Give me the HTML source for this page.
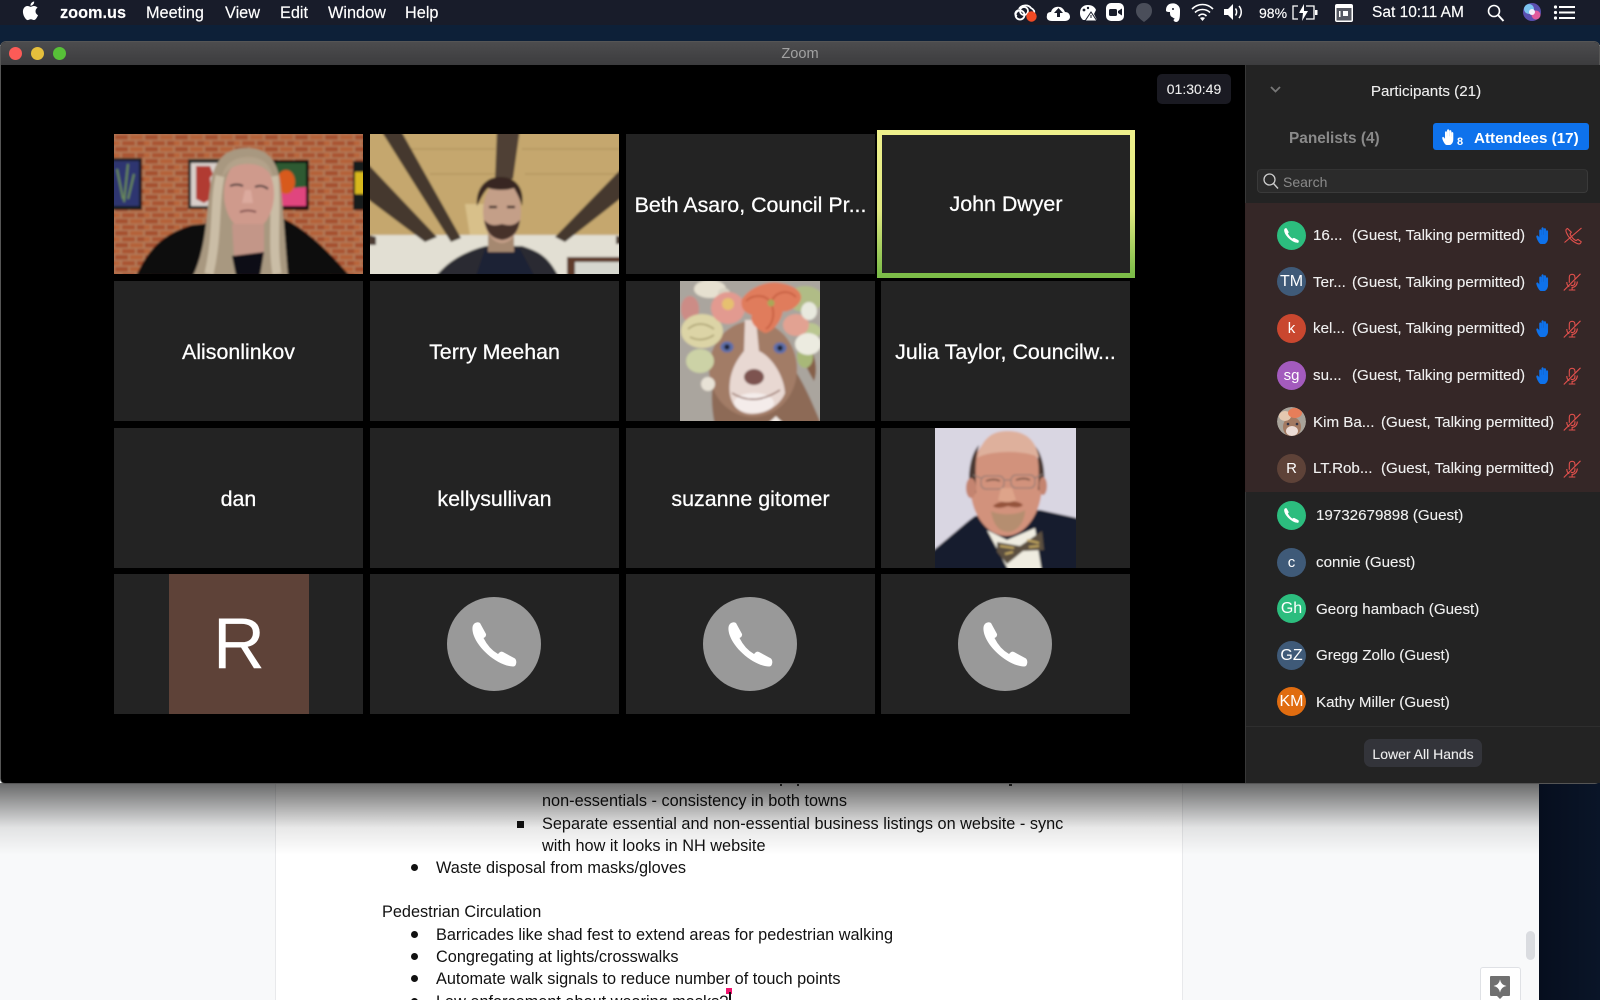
<!DOCTYPE html>
<html lang="en"><head><meta charset="utf-8"><title>Zoom</title>
<style>
*{box-sizing:border-box}
html,body{margin:0;width:1600px;height:1000px;overflow:hidden;background:#f8f9fa;font-family:"Liberation Sans",Arial,sans-serif}
#root{position:absolute;left:0;top:0;width:1600px;height:1000px;overflow:hidden}
.a{position:absolute}
.t{position:absolute;white-space:nowrap}
#menu{left:0;top:0;width:1600px;height:25px;background:#181c2a}
#desk{left:0;top:25px;width:1600px;height:20px;background:#0d2038}
#deskr{left:1539px;top:780px;width:61px;height:220px;background:linear-gradient(90deg,#060e1e,#0a1528)}
.m{top:4px;height:18px;line-height:18px;font-size:16.3px;color:#fff;-webkit-text-stroke:.15px #fff}
#page{left:275px;top:783px;width:908px;height:217px;background:#fff;border-left:1px solid #e8e9eb;border-right:1px solid #e8e9eb}
#sh{left:0;top:783px;width:1539px;height:72px;background:linear-gradient(180deg,rgba(0,0,0,.58),rgba(0,0,0,.36) 28%,rgba(0,0,0,.09) 62%,rgba(0,0,0,0))}
.d{font-size:16.3px;line-height:22px;height:22px;color:#111}
.b{position:absolute;width:7px;height:7px;border-radius:50%;background:#111}
#win{left:0;top:41px;width:1600px;height:743px;background:#000;border:1px solid #555;border-radius:6px 6px 5px 5px;overflow:hidden}
#title{left:0;top:0;width:1598px;height:23px;background:linear-gradient(180deg,#4c4c4e,#3c3c3e);color:#a2a2a2;font-size:14.6px;line-height:25px;text-align:center}
.c{position:absolute;background:#232323;color:#fff;font-size:21.4px;text-align:center;overflow:hidden;-webkit-text-stroke:.25px #fff}
.w{width:249px}
.ph{position:absolute;left:77px;top:23px;width:94px;height:94px;border-radius:50%;background:#999}
#panel{left:1245px;top:65px;width:355px;height:718px;background:#232323;border-left:1px solid #383838}
#hl{left:1245px;top:203px;width:355px;height:289px;background:#352727}
.av{position:absolute;left:1277px;width:29px;height:29px;border-radius:50%;color:#fff;font-size:15px;line-height:29px;text-align:center}
.n{font-size:15.15px;line-height:20px;height:20px;color:#f0f0f0;-webkit-text-stroke:.12px #f0f0f0}
</style></head>
<body>
<div id="root">
<svg width="0" height="0" style="position:absolute"><defs>
<symbol id="phone" viewBox="0 0 45 45"><path fill="#fff" d="M3 1Q6-.5 8 1L14 12Q14.5 14 12.5 15.5L11.5 16Q17 27 26 32L27.5 30.5Q29 29 31 30L43 36.5Q45 38.5 44 42Q43.5 44.5 41 44.5C25 44 2 24 .5 8Q0 3 3 1Z"/></symbol>
<symbol id="hand" viewBox="0 0 14 17"><path d="M3 16C1.500 14 .3 11.500 0 9.500c0-.9 1-1.200 1.500-.5L3 11V3.500c0-1.200 1.600-1.200 1.700 0V8h.5V1.500c0-1.300 1.700-1.300 1.800 0V8h.5V2.300c0-1.200 1.700-1.200 1.800 0V8.500h.4V4.300c0-1.100 1.600-1.100 1.600 0V11c0 3-1.500 6-4.500 6H5c-.8 0-1.500-.4-2-1Z" fill="currentColor" stroke="currentColor" stroke-width=".5"/></symbol>
<symbol id="mic" viewBox="0 0 18 18"><g fill="none" stroke="#e2504c" stroke-width="1.100"><path d="M.8 17.500 17.500.8"/><path d="M6.300 9.800V4c0-3.600 5.600-3.600 5.600 0v1.600M7.800 12c1.800 1.300 4.100 0 4.100-2.300V8.300"/><path d="M3.800 9c0 2.500 1 4 2.500 4.800M14.300 8.500c0 3.500-2.300 5.900-5.200 5.900v2.600M5.800 17h6.500"/></g></symbol>
<symbol id="telmute" viewBox="0 0 18 18"><g fill="none" stroke="#e2504c" stroke-width="1.100"><path d="M.5 15.500 17.500 1"/><path d="M3.500 1.500C2 2 1.500 3 2.200 5c1.800 5 6 9.500 11 11.500 2.500 1 3.700 0 4-1.800l-3.200-2.300-2 1.200C9.500 12.500 7 9.500 6 7l1.300-1.800z"/></g></symbol>
<filter id="bl" x="-5%" y="-5%" width="110%" height="110%"><feGaussianBlur stdDeviation="1"/></filter>
<pattern id="brick" width="30" height="12" patternUnits="userSpaceOnUse"><rect width="30" height="12" fill="#b27c5a"/><rect x="1" y="1" width="13" height="4.500" fill="#a5502e"/><rect x="16" y="1" width="13" height="4.500" fill="#b56238"/><rect x="-7" y="7" width="13" height="4.500" fill="#b8653a"/><rect x="8" y="7" width="13" height="4.500" fill="#aa5430"/><rect x="23" y="7" width="13" height="4.500" fill="#a5502e"/></pattern>
</defs></svg>

<div class="a" id="menu"></div>
<div class="a" id="desk"></div>
<div class="t m" style="left:60px;font-weight:700">zoom.us</div>
<div class="t m" style="left:146px">Meeting</div>
<div class="t m" style="left:225px">View</div>
<div class="t m" style="left:280px">Edit</div>
<div class="t m" style="left:328px">Window</div>
<div class="t m" style="left:405px">Help</div>
<svg class="a" style="left:22px;top:1px" width="17" height="20" viewBox="3 1.500 18 21.500"><path fill="#fff" d="M18.710 19.500c-.83 1.240-1.710 2.450-3.050 2.470-1.340.03-1.770-.79-3.290-.79-1.530 0-2 .77-3.270.82-1.310.05-2.300-1.320-3.140-2.530C4.250 17 2.940 12.450 4.700 9.390c.87-1.520 2.430-2.480 4.120-2.510 1.280-.02 2.500.87 3.290.87.78 0 2.260-1.070 3.810-.91.65.03 2.470.26 3.640 1.980-.09.06-2.170 1.280-2.150 3.810.03 3.020 2.650 4.030 2.680 4.040-.03.07-.42 1.440-1.380 2.830M13 3.500c.73-.83 1.940-1.460 2.940-1.500.13 1.170-.34 2.350-1.040 3.190-.69.85-1.830 1.510-2.950 1.420-.15-1.150.41-2.350 1.050-3.110z"/></svg>

<!-- status bar icons -->
<svg class="a" style="left:1000px;top:0" width="600" height="25" viewBox="0 0 600 25">
<g fill="none" stroke="#fff" stroke-width="1.800"><circle cx="24" cy="11" r="4"/><circle cx="20" cy="15" r="4.500"/><path d="M19 9c2-4 9-5 12-1 2 1 4 3 3 6"/><path d="M17 16c-3-1-2-5 2-6"/></g>
<circle cx="31.500" cy="16.500" r="5.200" fill="#f04a24"/>
<path fill="#fff" d="M52 21c-4 0-6-2-5-6 0-2 2-3 4-3 1-4 5-6 9-5 3 1 4 3 5 5 3 0 5 2 5 5 0 2-2 4-5 4Z"/><path fill="#181c2a" d="M58.500 8l4.500 5h-3v4h-3v-4h-3z"/>
<path fill="#fff" d="M80 13c0-5 3-8 8-8 4 0 7 2 8 5l-2 4 3 6H83c-2-2-3-4-3-7Z"/><path fill="#fff" d="M91 12l6 9H85z" stroke="#181c2a"/><g fill="#181c2a"><circle cx="84" cy="10" r="1.400"/><circle cx="88" cy="8" r="1.200"/><rect x="90.500" y="15" width="1" height="3"/></g>
<rect x="106" y="3" width="18" height="18" rx="5" fill="#fff"/><rect x="109" y="9" width="8" height="7" rx="1.500" fill="#181c2a"/><path d="M118 11l4-2.500v7l-4-2.500z" fill="#181c2a"/>
<path d="M144 3c-5 0-8 3-8 8 0 5 4 8 8 11 4-3 8-6 8-11 0-5-3-8-8-8Z" fill="#4a4e5a"/>
<path fill="#fff" d="M168 5c2-2 6-2 8-1 2 1 4 3 4 6 0 4 0 8-1 10-2 3-4 2-5 1-1-1 0-2 1-2l-3-2c-2-1-2-3-2-5-2 0-3 0-4-1 0-2 0-4 2-6Z"/><circle cx="173" cy="9" r="1" fill="#181c2a"/>
<g fill="none" stroke="#fff" stroke-width="1.600"><path d="M192 9c6-6 15-6 21 0"/><path d="M195 12.500c4-4 11-4 15 0"/><path d="M198.500 16c2.500-2.500 5.500-2.500 8 0"/></g><path fill="#fff" d="M202.500 21l-2.500-3c1.500-1 3.500-1 5 0Z"/>
<path fill="#fff" d="M224 9h4l5-5v16l-5-5h-4z"/><g fill="none" stroke="#fff" stroke-width="1.500"><path d="M235.500 8.500c1.500 2 1.500 5 0 7"/><path d="M239 6c3 3.500 3 8.500 0 12"/></g>
<g fill="none" stroke="#fff" stroke-width="1.300"><path d="M298 6h-5v13h5M306 6h8v13h-8"/></g><path fill="#fff" d="M304 4l-5 9h4l-1 8 6-10h-4z"/><rect x="315" y="10" width="2.500" height="5" fill="#fff"/>
<rect x="335" y="4" width="18" height="18" rx="2" fill="#fff"/><rect x="336.500" y="8" width="15" height="12.500" fill="#555862"/><g fill="#fff"><rect x="339" y="11" width="1.500" height="6"/><rect x="343" y="11" width="5" height="5"/></g>
<g fill="none" stroke="#fff" stroke-width="1.600"><circle cx="494" cy="11" r="5.500"/><path d="M498 15l5.500 6" stroke-width="2"/></g>
<circle cx="532" cy="12" r="9" fill="#5a4fb0"/><circle cx="529" cy="9" r="5" fill="#7cc4f0"/><circle cx="536" cy="15" r="4.500" fill="#e05a9c"/><circle cx="532" cy="12" r="3" fill="#f4f0fa"/>
<g fill="#fff"><circle cx="555.500" cy="7" r="1.600"/><circle cx="555.500" cy="12.500" r="1.600"/><circle cx="555.500" cy="18" r="1.600"/><rect x="559" y="6" width="16" height="2"/><rect x="559" y="11.500" width="16" height="2"/><rect x="559" y="17" width="16" height="2"/></g>
</svg>
<div class="t m" style="left:1259px;font-size:14px">98%</div>
<div class="t m" style="left:1372px;font-size:15.5px">Sat 10:11 AM</div>

<!-- document behind -->
<div class="a" id="page"></div>
<div class="a" id="deskr"></div>
<div class="a" style="left:780px;top:783px;width:1.500px;height:3px;background:#333"></div>
<div class="a" style="left:797px;top:783px;width:1.500px;height:3px;background:#333"></div>
<div class="a" style="left:1009px;top:783px;width:3px;height:3px;background:#333"></div>
<div class="t d" style="left:542px;top:790px">non-essentials - consistency in both towns</div>
<div class="a" style="left:517px;top:821px;width:7px;height:7px;background:#111"></div>
<div class="t d" style="left:542px;top:813px">Separate essential and non-essential business listings on website - sync</div>
<div class="t d" style="left:542px;top:835px">with how it looks in NH website</div>
<div class="b" style="left:411px;top:864px"></div>
<div class="t d" style="left:436px;top:857px">Waste disposal from masks/gloves</div>
<div class="t d" style="left:382px;top:901px">Pedestrian Circulation</div>
<div class="b" style="left:411px;top:931px"></div>
<div class="t d" style="left:436px;top:924px">Barricades like shad fest to extend areas for pedestrian walking</div>
<div class="b" style="left:411px;top:953px"></div>
<div class="t d" style="left:436px;top:946px">Congregating at lights/crosswalks</div>
<div class="b" style="left:411px;top:975px"></div>
<div class="t d" style="left:436px;top:968px">Automate walk signals to reduce number of touch points</div>
<div class="b" style="left:411px;top:998px"></div>
<div class="t d" style="left:436px;top:991px">Law enforcement about wearing masks?</div>
<div class="a" style="left:726px;top:988px;width:6px;height:6px;background:#f0146e"></div>
<div class="a" style="left:729px;top:992px;width:1.500px;height:8px;background:#111"></div>
<div class="a" style="left:1526px;top:931px;width:9px;height:29px;border-radius:5px;background:#dadce0"></div>
<div class="a" style="left:1480px;top:967px;width:41px;height:40px;background:#fff;border:1px solid #dfe1e5;border-radius:3px"></div>
<svg class="a" style="left:1490px;top:976px" width="20" height="24" viewBox="0 0 20 24"><path fill="#707070" d="M1 0h18a1 1 0 0 1 1 1v18a1 1 0 0 1-1 1h-6l-3 3-3-3H1a1 1 0 0 1-1-1V1a1 1 0 0 1 1-1Z"/><path fill="#fff" d="M10 3.500Q11 9 16.500 10 11 11 10 16.500 9 11 3.500 10 9 9 10 3.500Z"/></svg>
<div class="a" id="sh"></div>

<!-- Zoom window -->
<div class="a" id="win">
<div class="a" id="title">Zoom</div>
<div class="a" style="left:8px;top:5px;width:13px;height:13px;border-radius:50%;background:#fc5b57"></div>
<div class="a" style="left:30px;top:5px;width:13px;height:13px;border-radius:50%;background:#e5bf3c"></div>
<div class="a" style="left:52px;top:5px;width:13px;height:13px;border-radius:50%;background:#57c038"></div>
</div>

<div class="a" style="left:1157px;top:74px;width:74px;height:30px;border-radius:5px;background:#1a1a22;color:#eee;font-size:14px;line-height:30px;text-align:center;-webkit-text-stroke:.1px #eee">01:30:49</div>

<!-- Cell 1: woman -->
<svg class="a" style="left:114px;top:134px" width="249" height="140" viewBox="0 0 249 140"><rect width="249" height="140" fill="#b0674a"/><g filter="url(#bl)">
<rect x="-5" y="-5" width="260" height="150" fill="url(#brick)"/>
<rect x="-3" y="24" width="31" height="52" fill="#141a1c"/><rect x="-3" y="27" width="28" height="45" fill="#2d3670"/><path d="M3 35l6 30M14 30l-4 38M20 40l-6 25" stroke="#6a8a58" stroke-width="2"/>
<rect x="74" y="25" width="36" height="50" fill="#252a28"/><rect x="77" y="29" width="32" height="43" fill="#d8cfca"/><path d="M82 32h14l3 8-3 4 2 20-8 5-8-4z" fill="#b13a33"/>
<rect x="159" y="26" width="36" height="50" fill="#111"/><rect x="162" y="29" width="30" height="43" fill="#2f5a30"/><path d="M165 55l27-2v19h-24z" fill="#e0457e"/><ellipse cx="172" cy="48" rx="9" ry="12" fill="#d85a1c"/>
<rect x="239" y="27" width="12" height="49" fill="#141a1c"/><rect x="241" y="38" width="10" height="22" fill="#d8b81c"/>
<path d="M22 142C36 112 50 100 78 91L165 83C190 92 215 118 236 142Z" fill="#0c0a10"/>
<path d="M79 142C93 112 92 80 96 55C99 25 112 14 133 14C153 14 165 26 167 55C170 85 172 120 174 142Z" fill="#a89880"/>
<path d="M95 140C104 100 100 70 106 42M160 42C163 80 158 110 163 140" stroke="#cabda6" stroke-width="9" fill="none"/>
<ellipse cx="135" cy="60" rx="25" ry="37" fill="#cf9a8c"/>
<path d="M118 90L150 90 150 122 120 122Z" fill="#c39688"/>
<path d="M118 122L150 118 146 142H122Z" fill="#111116"/>
<path d="M116 52q7-3 13 0M141 53q7-3 13 2" stroke="#4a3a3a" stroke-width="2" fill="none"/><path d="M126 78q8-3 16 0" stroke="#7a4a48" stroke-width="1.800" fill="none"/>
<path d="M131 56l-3 13h11l-2-13z" fill="#dcaa9e"/>
<path d="M108 44c2-14 12-21 26-21s23 7 25 21c-6-9-12-14-25-14s-20 5-26 14Z" fill="#b3a28a"/>
</g></svg>

<!-- Cell 2: man -->
<svg class="a" style="left:370px;top:134px" width="249" height="140" viewBox="0 0 249 140"><rect width="249" height="140" fill="#c5a76e"/><g filter="url(#bl)">
<rect x="-5" y="-5" width="260" height="107" fill="#c5a76e"/>
<path d="M95 70l45 0-2 32H100z" fill="#d8c08a"/>
<path d="M40 15h85M152 15h97M60 40h65M155 40h94" stroke="#ab8e58" stroke-width="1"/>
<rect x="-5" y="101" width="260" height="45" fill="#e2dfd3"/>
<path d="M10-5H30L91 104 81 108Z" fill="#45372e"/>
<path d="M127-5H150L143 45H125Z" fill="#4f4036"/>
<path d="M-5 27L67 103 55 108-5 63Z" fill="#45372e"/>
<path d="M255 31V61L195 108 185 103Z" fill="#45372e"/>
<path d="M-5 100l11 3v8H-5z" fill="#4b3b32"/><path d="M246 102h8v8h-8z" fill="#4b3b32"/>
<path d="M64 145C78 125 100 116 116 112L152 112C170 118 178 122 190 145Z" fill="#2a2c30"/>
<path d="M115 115L150 115 166 145H105Z" fill="#1c2034"/>
<rect x="118" y="90" width="26" height="28" fill="#a58870"/>
<ellipse cx="132" cy="78" rx="19" ry="31" fill="#c49f88"/>
<path d="M114 86c2 8 4 18 18 20 14-2 17-12 18-20-6 6-10 6-18 4-8 2-12 2-18-4Z" fill="#46302a"/>
<path d="M107 72c-2-18 10-30 24-29 15 0 24 12 21 29-3-10-6-14-8-18-8 3-20 2-26 0-4 4-7 10-11 18Z" fill="#382820"/>
<path d="M119 73h8M137 73h8" stroke="#33241c" stroke-width="2.200"/>
<rect x="197" y="123" width="56" height="22" fill="#5e3a2c"/><rect x="205" y="128" width="48" height="17" fill="#d6d7cf"/>
</g></svg>

<div class="c w" style="left:626px;top:134px;height:140px;line-height:142px">Beth Asaro, Council Pr...</div>
<div class="c" style="left:877px;top:130px;width:258px;height:148px;line-height:138px;border:5px solid;border-image:linear-gradient(180deg,#eef08c,#dfe880 55%,#7cbc48) 1">John Dwyer</div>

<div class="c w" style="left:114px;top:281px;height:140px;line-height:142px">Alisonlinkov</div>
<div class="c w" style="left:370px;top:281px;height:140px;line-height:142px">Terry Meehan</div>
<div class="c w" style="left:626px;top:281px;height:140px"></div>
<!-- dog -->
<svg class="a" style="left:680px;top:281px" width="140" height="140" viewBox="0 0 140 140"><rect width="140" height="140" fill="#aaa59e"/><g filter="url(#bl)">
<rect x="-5" y="-5" width="150" height="150" fill="#aaa59e"/>
<path d="M35 145C28 110 30 75 70 55C110 65 125 105 142 145Z" fill="#8d6a56"/>
<ellipse cx="73" cy="88" rx="44" ry="48" fill="#a27c66"/>
<path d="M65 39H76L79 70C92 76 104 95 105 112 100 125 85 133 72 133 58 133 47 122 50 100 52 85 60 75 64 70Z" fill="#e8d8d2"/>
<ellipse cx="74" cy="122" rx="20" ry="10" fill="#f4ecea"/>
<path d="M96 135l10 10H85Z" fill="#f0e8e2"/>
<path d="M52 112q22 14 48-3" stroke="#85584c" stroke-width="1.300" fill="none"/>
<ellipse cx="47" cy="66" rx="6.500" ry="5.500" fill="#5d6ea8"/><circle cx="47" cy="66" r="2.800" fill="#1f2438"/>
<ellipse cx="100" cy="67" rx="6.500" ry="5.500" fill="#5d6ea8"/><circle cx="100" cy="67" r="2.800" fill="#1f2438"/>
<ellipse cx="74" cy="96" rx="10" ry="8" fill="#7d5250"/>
<path d="M128 62C136 75 138 90 134 100 125 85 122 75 120 68Z" fill="#866048"/>
<ellipse cx="125" cy="18" rx="18" ry="13" fill="#b0bc86"/><ellipse cx="130" cy="50" rx="11" ry="8" fill="#bac690"/>
<ellipse cx="125" cy="76" rx="8" ry="11" fill="#a8b878"/>
<ellipse cx="30" cy="8" rx="16" ry="9" fill="#e6e0d0"/><ellipse cx="44" cy="12" rx="6" ry="5" fill="#d8d2c2"/>
<ellipse cx="10" cy="28" rx="9" ry="13" fill="#cc8c86"/>
<ellipse cx="22" cy="50" rx="21" ry="17" fill="#dcd4a6"/><path d="M8 48q12-10 26 0M10 56q12 6 24-2" stroke="#a89e6e" stroke-width="1.500" fill="none"/><ellipse cx="20" cy="80" rx="14" ry="12" fill="#ccd2a6"/>
<ellipse cx="48" cy="27" rx="17" ry="16" fill="#e29a90"/><ellipse cx="48" cy="23" rx="6" ry="6" fill="#e6c070"/>
<path d="M62 18C72 4 90 0 100 2 118 5 125 14 119 22 115 28 105 32 103 30 100 44 90 52 85 52 72 46 70 38 72 34 64 32 60 26 62 18Z" fill="#e07c5c"/>
<path d="M91 22C85 12 72 14 66 20M91 22C95 10 108 8 116 16M91 22C96 34 92 44 86 48" stroke="#c25a3e" stroke-width="1.500" fill="none"/>
<circle cx="91" cy="22" r="3.500" fill="#a8a858"/>
<ellipse cx="116" cy="44" rx="13" ry="11" fill="#e2a292"/>
<ellipse cx="128" cy="63" rx="13" ry="11" fill="#ecebe0"/><ellipse cx="129" cy="30" rx="8" ry="9" fill="#e8e9de"/>
<ellipse cx="28" cy="103" rx="7" ry="7" fill="#e8e2d6"/>
</g></svg>
<div class="c w" style="left:881px;top:281px;height:140px;line-height:142px">Julia Taylor, Councilw...</div>

<div class="c w" style="left:114px;top:428px;height:140px;line-height:142px">dan</div>
<div class="c w" style="left:370px;top:428px;height:140px;line-height:142px">kellysullivan</div>
<div class="c w" style="left:626px;top:428px;height:140px;line-height:142px">suzanne gitomer</div>
<div class="c w" style="left:881px;top:428px;height:140px"></div>
<!-- bald man -->
<svg class="a" style="left:935px;top:428px" width="141" height="140" viewBox="0 0 141 140"><rect width="141" height="140" fill="#d9d6e2"/><g filter="url(#bl)">
<rect x="-5" y="-5" width="151" height="150" fill="#d9d6e2"/>
<path d="M-5 125C20 105 30 95 40 88L105 82 146 91V145H-5Z" fill="#151b2f"/>
<path d="M52 102L72 112 100 100 107 145H75Z" fill="#efece0"/>
<path d="M62 114L85 118 107 103 109 122 88 123 72 136 62 124Z" fill="#5c5040"/>
<path d="M65 118l14 2M92 112l12 3M70 126l8-2M94 119l10-1" stroke="#c4a860" stroke-width="2"/>
<ellipse cx="71" cy="56" rx="36" ry="52" fill="#d2927c"/>
<path d="M35 65C32 45 36 25 44 17 39 35 41 50 41 65ZM108 62C112 42 106 24 100 18 105 35 104 50 103 62Z" fill="#4a3830"/>
<path d="M42 30C48 7 60 3 73 3c16 0 28 8 31 27-10-8-50-8-62 0Z" fill="#deb09c"/>
<ellipse cx="36" cy="60" rx="5" ry="10" fill="#c48470"/><ellipse cx="108" cy="58" rx="4" ry="9" fill="#c48470"/>
<g fill="none" stroke="#8a7a74" stroke-width="1"><rect x="46" y="48" width="23" height="13" rx="5"/><rect x="76" y="47" width="24" height="13" rx="5"/><path d="M69 52h7M38 47l8 3M100 50l8-4"/></g>
<path d="M51 53q8-3 14 0M81 52q8-3 14 0" stroke="#5c4438" stroke-width="1.400" fill="none"/>
<path d="M58 78c6-6 24-7 30-1-3 3-8 3-15 1-6 2-11 3-15 0Z" fill="#94523a"/>
<path d="M56 83c6 4 26 5 34-1 0 8-4 20-16 22-12 0-16-10-18-21Z" fill="#b58e70"/>
<path d="M66 60l-3 12c5 3 13 3 18 0l-4-12z" fill="#dea48a"/>
</g></svg>

<div class="c w" style="left:114px;top:574px;height:140px"></div>
<div class="t" style="left:169px;top:574px;width:140px;height:140px;background:#5e4238;color:#fff;font-size:72px;line-height:140px;text-align:center">R</div>
<div class="c w" style="left:370px;top:574px;height:140px"><div class="ph"></div><svg class="a" style="left:102px;top:48px" width="45" height="45"><use href="#phone"/></svg></div>
<div class="c w" style="left:626px;top:574px;height:140px"><div class="ph"></div><svg class="a" style="left:102px;top:48px" width="45" height="45"><use href="#phone"/></svg></div>
<div class="c w" style="left:881px;top:574px;height:140px"><div class="ph"></div><svg class="a" style="left:102px;top:48px" width="45" height="45"><use href="#phone"/></svg></div>

<!-- Panel -->
<div class="a" id="panel"></div>
<div class="a" id="hl"></div>
<svg class="a" style="left:1270px;top:86px" width="11" height="7" viewBox="0 0 11 7"><path d="M1 1l4.500 4.500L10 1" fill="none" stroke="#777" stroke-width="1.800"/></svg>
<div class="t n" style="left:1245px;top:82px;width:362px;text-align:center;color:#eee">Participants (21)</div>
<div class="t" style="left:1289px;top:127px;font-size:15.4px;line-height:23px;font-weight:700;color:#8a8a8a">Panelists (4)</div>
<div class="a" style="left:1433px;top:123px;width:156px;height:27px;border-radius:3px;background:#0e72ec"></div>
<svg class="a" style="left:1442px;top:129px;color:#fff" width="14" height="16"><use href="#hand"/></svg>
<div class="t" style="left:1457px;top:135px;font-size:11px;line-height:14px;font-weight:700;color:#fff">8</div>
<div class="t" style="left:1474px;top:127px;font-size:15.2px;line-height:23px;font-weight:700;color:#fff">Attendees (17)</div>
<div class="a" style="left:1257px;top:169px;width:331px;height:24px;border-radius:4px;background:#2b2b2b;border:1px solid #3a3a3a;border-top-color:#333"></div>
<svg class="a" style="left:1263px;top:173px" width="16" height="17" viewBox="0 0 16 17"><circle cx="6.500" cy="6.500" r="5.500" fill="none" stroke="#ccc" stroke-width="1.300"/><path d="M10.500 10.500l4.500 5" stroke="#ccc" stroke-width="1.400"/></svg>
<div class="t" style="left:1283px;top:172px;font-size:14px;line-height:20px;color:#8a8a8a">Search</div>

<div class="av" style="top:221px;background:#2cbd7e"><svg class="a" style="left:7px;top:7px" width="15" height="15"><use href="#phone"/></svg></div>
<div class="t n" style="left:1313px;top:226px">16...</div><div class="t n" style="left:1352px;top:226px">(Guest, Talking permitted)</div>
<svg class="a" style="left:1536px;top:227px;color:#0e72ec" width="15" height="17"><use href="#hand"/></svg><svg class="a" style="left:1564px;top:227px" width="18" height="18"><use href="#telmute"/></svg>

<div class="av" style="top:267px;background:#3f5a78;font-size:16px">TM</div>
<div class="t n" style="left:1313px;top:273px">Ter...</div><div class="t n" style="left:1352px;top:273px">(Guest, Talking permitted)</div>
<svg class="a" style="left:1536px;top:274px;color:#0e72ec" width="15" height="17"><use href="#hand"/></svg><svg class="a" style="left:1563px;top:273px" width="18" height="18"><use href="#mic"/></svg>

<div class="av" style="top:314px;background:#c9472f">k</div>
<div class="t n" style="left:1313px;top:319px">kel...</div><div class="t n" style="left:1352px;top:319px">(Guest, Talking permitted)</div>
<svg class="a" style="left:1536px;top:320px;color:#0e72ec" width="15" height="17"><use href="#hand"/></svg><svg class="a" style="left:1563px;top:320px" width="18" height="18"><use href="#mic"/></svg>

<div class="av" style="top:361px;background:#a35bbd">sg</div>
<div class="t n" style="left:1313px;top:366px">su...</div><div class="t n" style="left:1352px;top:366px">(Guest, Talking permitted)</div>
<svg class="a" style="left:1536px;top:367px;color:#0e72ec" width="15" height="17"><use href="#hand"/></svg><svg class="a" style="left:1563px;top:367px" width="18" height="18"><use href="#mic"/></svg>

<svg class="av" style="top:407px" viewBox="0 0 29 29"><defs><clipPath id="cav"><circle cx="14.500" cy="14.500" r="14.500"/></clipPath></defs><g clip-path="url(#cav)"><rect width="29" height="29" fill="#a8a39a"/><ellipse cx="15" cy="20" rx="9" ry="10" fill="#a37a62"/><ellipse cx="15" cy="24" rx="6" ry="5" fill="#ecdcd6"/><ellipse cx="8" cy="9" rx="6" ry="5" fill="#e4c8b0"/><ellipse cx="18" cy="6" rx="7" ry="5" fill="#e67e5a"/><circle cx="11" cy="17" r="1.300" fill="#334"/><circle cx="20" cy="17" r="1.300" fill="#334"/></g></svg>
<div class="t n" style="left:1313px;top:413px">Kim Ba...</div><div class="t n" style="left:1381px;top:413px">(Guest, Talking permitted)</div>
<svg class="a" style="left:1563px;top:413px" width="18" height="18"><use href="#mic"/></svg>

<div class="av" style="top:454px;background:#5e4238">R</div>
<div class="t n" style="left:1313px;top:459px">LT.Rob...</div><div class="t n" style="left:1381px;top:459px">(Guest, Talking permitted)</div>
<svg class="a" style="left:1563px;top:460px" width="18" height="18"><use href="#mic"/></svg>

<div class="av" style="top:501px;background:#2cbd7e"><svg class="a" style="left:7px;top:7px" width="15" height="15"><use href="#phone"/></svg></div>
<div class="t n" style="left:1316px;top:506px">19732679898 (Guest)</div>
<div class="av" style="top:548px;background:#3f5a78">c</div>
<div class="t n" style="left:1316px;top:553px">connie (Guest)</div>
<div class="av" style="top:594px;background:#2cbd7e;font-size:16px">Gh</div>
<div class="t n" style="left:1316px;top:600px">Georg hambach (Guest)</div>
<div class="av" style="top:641px;background:#3f5a78;font-size:16px">GZ</div>
<div class="t n" style="left:1316px;top:646px">Gregg Zollo (Guest)</div>
<div class="av" style="top:687px;background:#e06c10;font-size:16px">KM</div>
<div class="t n" style="left:1316px;top:693px">Kathy Miller (Guest)</div>

<div class="a" style="left:1246px;top:726px;width:354px;height:1px;background:#2e2e2e"></div>
<div class="a" style="left:1364px;top:739px;width:118px;height:28px;border-radius:7px;background:#33343a;color:#eee;font-size:14px;line-height:30px;text-align:center;-webkit-text-stroke:.1px #eee">Lower All Hands</div>
</div>
</body></html>
